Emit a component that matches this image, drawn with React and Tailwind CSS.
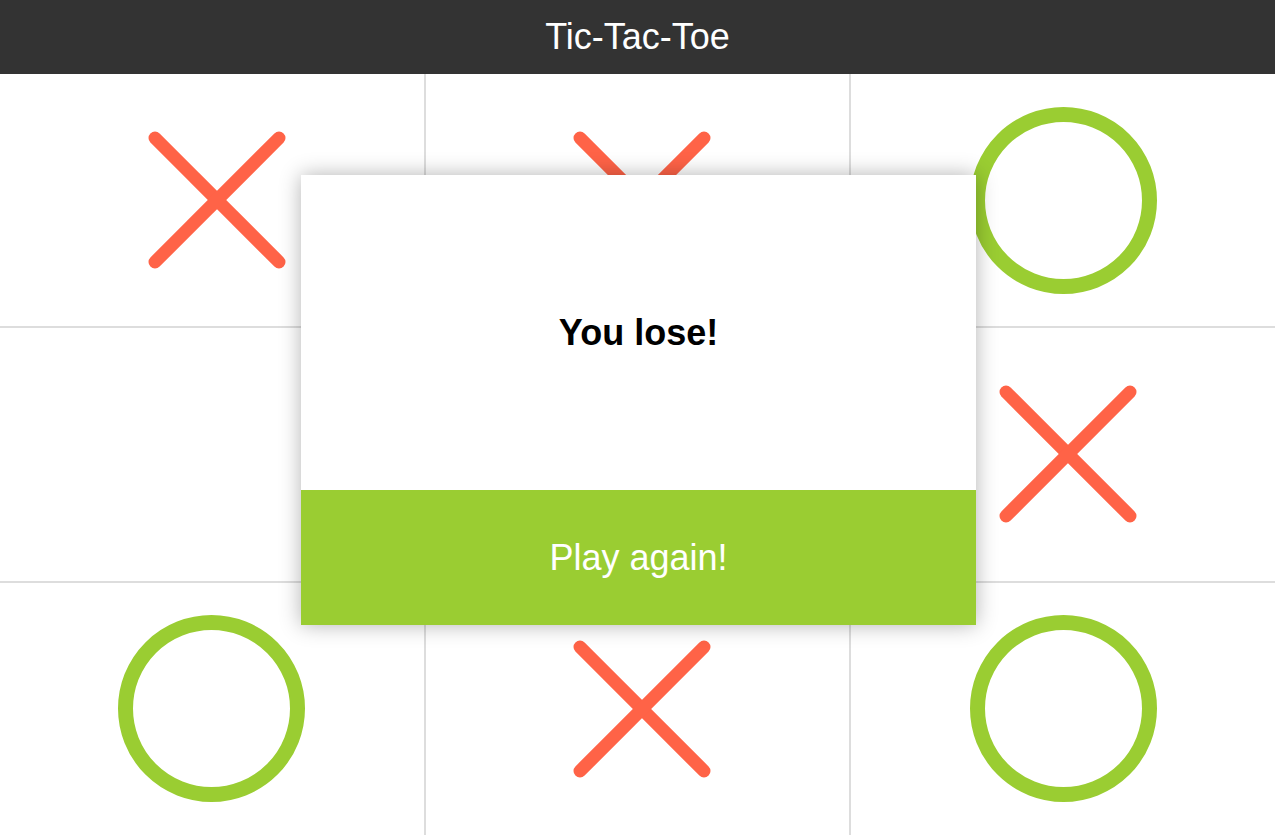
const board = ["x", "x", "o", "", "", "x", "o", "x", "o"];

const Cross = () => (
  <svg width="138" height="138" viewBox="0 0 138 138" className="ml-[10px]">
    <g stroke="#ff6347" strokeWidth="13" strokeLinecap="round">
      <line x1="7" y1="7" x2="131" y2="131" />
      <line x1="131" y1="7" x2="7" y2="131" />
    </g>
  </svg>
);

const Nought = () => (
  <div className="w-[187px] h-[187px] rounded-full border-[15px] border-[#9acd32]" />
);

export default function App() {
  return (
    <div
      className="relative h-screen flex flex-col bg-white"
      style={{ fontFamily: '"Liberation Sans", Arial, sans-serif' }}
    >
      <header className="h-[74px] shrink-0 bg-[#333333] flex items-center justify-center">
        <h1 className="text-white text-[36px] leading-none">Tic-Tac-Toe</h1>
      </header>

      <div className="flex-1 grid grid-cols-3 grid-rows-3 gap-[2px] bg-[#dddddd]">
        {board.map((cell, i) => (
          <div key={i} className="bg-white flex items-center justify-center">
            {cell === "x" && <Cross />}
            {cell === "o" && <Nought />}
          </div>
        ))}
      </div>

      <div className="absolute left-[301px] top-[175px] w-[675px] h-[450px] flex flex-col bg-white shadow-[0_0_20px_rgba(0,0,0,0.3)]">
        <div className="flex-1 flex items-center justify-center">
          <p className="text-black font-bold text-[36px] leading-none">You lose!</p>
        </div>
        <button className="h-[135px] bg-[#9acd32] text-white text-[36px] leading-none">
          Play again!
        </button>
      </div>
    </div>
  );
}
